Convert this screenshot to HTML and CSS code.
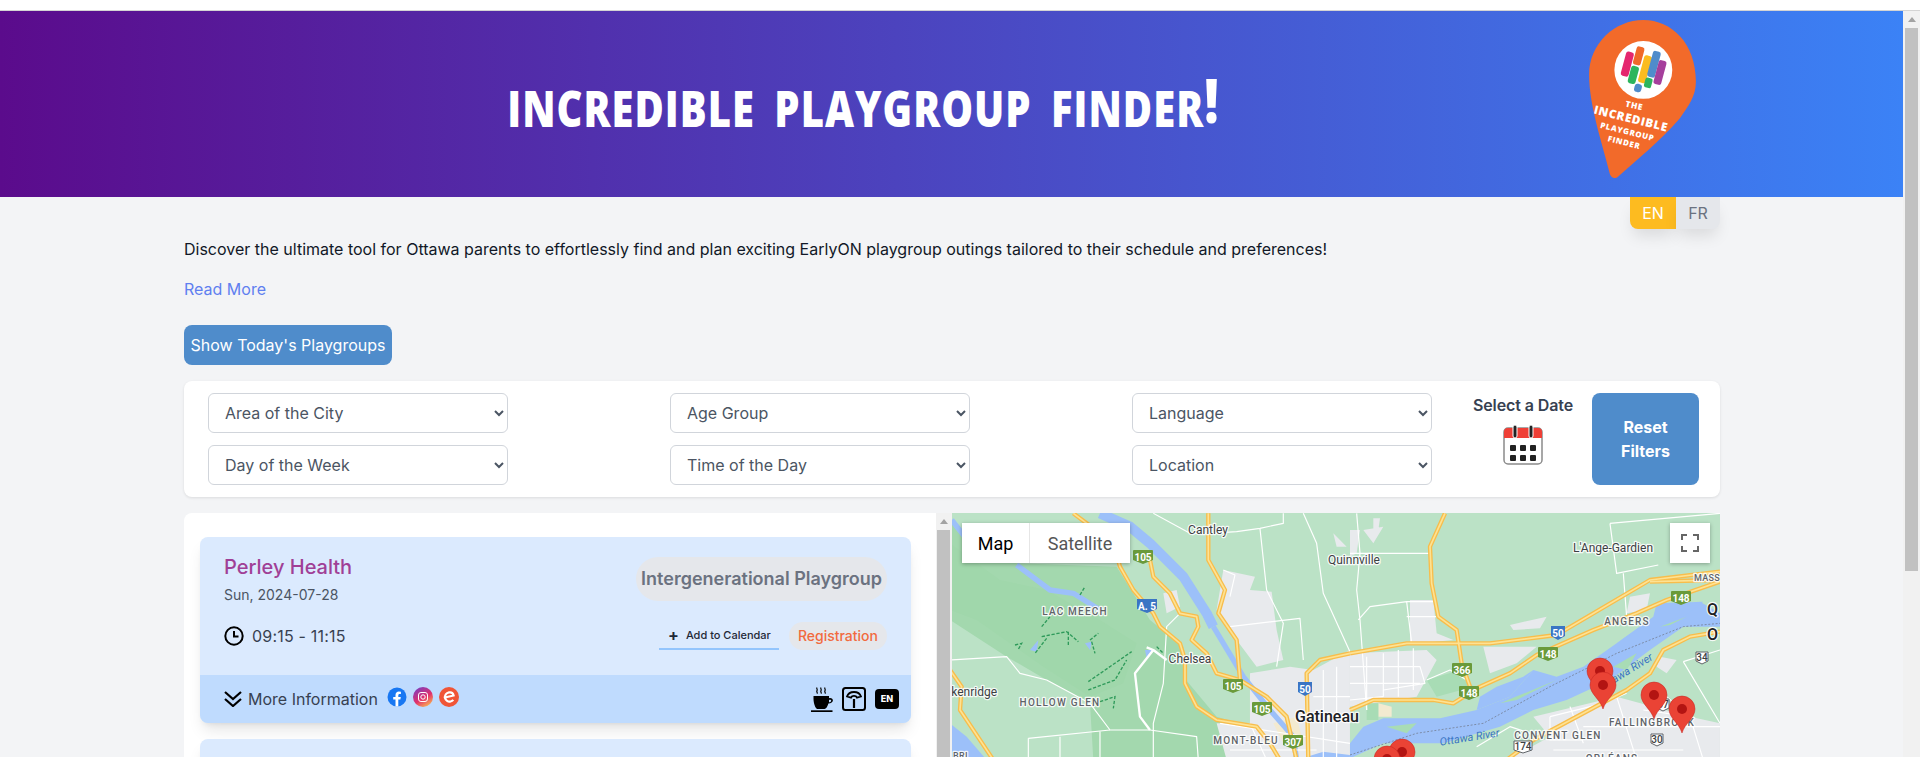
FILE: index.html
```html
<!DOCTYPE html>
<html lang="en">
<head>
  <meta charset="UTF-8" />
  <meta name="viewport" content="width=device-width, initial-scale=1.0"/>
  <title>Incredible Playgroup Finder</title>
  <link rel="stylesheet" href="styles.css">
</head>
<body>
  <div class="window">
    <div class="page">
      <header class="site-header">
        <h1 class="site-title">Incredible Playgroup Finder<span class="bang">!</span></h1>
        <svg class="logo" viewBox="87 30 321 475" aria-label="The Incredible Playgroup Finder">
          <path class="logo-pin" d="M150 495C130 410 87 290 87 195C87 100 165 30 250 30C335 30 408 100 408 215C408 260 385 290 360 325C300 395 230 450 172 503Q158 510 150 495Z"/>
          <circle cx="250" cy="180" r="87" fill="#fff"/>
          <rect x="190" y="125" width="24" height="75" rx="7" fill="#e5266f" transform="rotate(15 202 162)"/>
          <rect x="224" y="110" width="24" height="56" rx="7" fill="#f0692a" transform="rotate(15 236 138)"/>
          <rect x="208" y="168" width="24" height="54" rx="7" fill="#2db55d" transform="rotate(15 220 195)"/>
          <rect x="243" y="136" width="24" height="84" rx="7" fill="#fbbc20" transform="rotate(15 255 178)"/>
          <rect x="270" y="123" width="24" height="80" rx="7" fill="#4f8ccb" transform="rotate(15 282 163)"/>
          <rect x="288" y="151" width="24" height="74" rx="7" fill="#a53f9c" transform="rotate(15 300 188)"/>
          <rect x="254" y="204" width="22" height="30" rx="6" fill="#2db55d" transform="rotate(15 265 218)"/>
          <rect x="223" y="222" width="22" height="25" rx="9" fill="#4f8ccb" transform="rotate(15 234 234)"/>
          <g class="logo-text">
            <text x="221" y="296" font-size="25" transform="rotate(12 221 296)">THE</text>
            <text x="210" y="338" font-size="35" transform="rotate(14 210 338)">INCREDIBLE</text>
            <text x="200" y="374" font-size="24" transform="rotate(14 200 374)">PLAYGROUP</text>
            <text x="190" y="406" font-size="24" transform="rotate(14 190 406)">FINDER</text>
          </g>
        </svg>
      </header>

      <main class="container">
        <div class="lang-switch">
          <button class="lang lang-active">EN</button>
          <button class="lang">FR</button>
        </div>

        <p class="intro">Discover the ultimate tool for Ottawa parents to effortlessly find and plan exciting EarlyON playgroup outings tailored to their schedule and preferences!</p>
        <a class="read-more" href="#">Read More</a>

        <button class="today-btn">Show Today's Playgroups</button>

        <section class="filters">
          <div class="filter-grid">
            <select><option>Area of the City</option></select>
            <select><option>Age Group</option></select>
            <select><option>Language</option></select>
            <select><option>Day of the Week</option></select>
            <select><option>Time of the Day</option></select>
            <select><option>Location</option></select>
          </div>
          <div class="date-pick">
            <span class="date-label">Select a Date</span>
            <svg class="cal-icon" viewBox="0 0 40 40">
              <rect x="1" y="3" width="38" height="36" rx="4" fill="#fff" stroke="#8a8a8a" stroke-width="1.5"/>
              <path d="M1 13V7a4 4 0 0 1 4-4h30a4 4 0 0 1 4 4v6z" fill="#ef3f36"/>
              <rect x="10" y="0" width="4" height="13" rx="2" fill="#222" stroke="#fff"/>
              <rect x="26" y="0" width="4" height="13" rx="2" fill="#222" stroke="#fff"/>
              <g fill="#222">
                <rect x="7" y="20" width="6" height="6" rx="1"/>
                <rect x="17" y="20" width="6" height="6" rx="1"/>
                <rect x="27" y="20" width="6" height="6" rx="1"/>
                <rect x="7" y="30" width="6" height="6" rx="1"/>
                <rect x="17" y="30" width="6" height="6" rx="1"/>
                <rect x="27" y="30" width="6" height="6" rx="1"/>
              </g>
            </svg>
          </div>
          <button class="reset-btn">Reset Filters</button>
        </section>

        <section class="results">
          <div class="list-panel">
            <div class="list">
              <article class="card">
                <div class="card-body">
                  <div class="card-left">
                    <h2 class="venue">Perley Health</h2>
                    <div class="date">Sun, 2024-07-28</div>
                    <div class="time">
                      <svg class="clock" viewBox="0 0 20 20">
                        <circle cx="10" cy="10" r="8.700" fill="none" stroke="#000" stroke-width="2"/>
                        <path d="M10 5v5.500h4.500" fill="none" stroke="#000" stroke-width="2"/>
                      </svg>
                      09:15 - 11:15
                    </div>
                  </div>
                  <div class="card-right">
                    <span class="type-pill">Intergenerational Playgroup</span>
                    <div class="card-actions">
                      <a class="add-cal" href="#"><span class="plus">+</span>Add to Calendar</a>
                      <a class="reg-pill" href="#">Registration</a>
                    </div>
                  </div>
                </div>
                <div class="card-foot">
                  <div class="more">
                    <svg class="chevrons" viewBox="0 0 18 16">
                      <path d="M1 1l8 7 8-7M1 8l8 7 8-7" fill="none" stroke="#000" stroke-width="2.200"/>
                    </svg>
                    <span>More Information</span>
                    <div class="socials">
                      <svg class="social fb" viewBox="0 0 20 20">
                        <circle cx="10" cy="10" r="9.500" fill="#1877f2"/>
                        <path d="M8.500 19.500v-7H6.200V10h2.300V8c0-2.300 1.400-3.500 3.400-3.500l2 .2v2.200h-1.200c-1 0-1.400.6-1.400 1.300V10h2.500l-.4 2.500h-2.100v7z" fill="#fff"/>
                      </svg>
                      <svg class="social" viewBox="0 0 20 20">
                        <defs>
                          <linearGradient id="ig" x1="0.800" y1="1" x2="0.200" y2="0">
                            <stop offset="0" stop-color="#fdc04e"/>
                            <stop offset="0.450" stop-color="#e1306c"/>
                            <stop offset="1" stop-color="#7b3dc0"/>
                          </linearGradient>
                        </defs>
                        <circle cx="10" cy="10" r="10" fill="url(#ig)"/>
                        <rect x="5.500" y="5.500" width="9" height="9" rx="2.500" fill="none" stroke="#fff"/>
                        <circle cx="10" cy="10" r="2.200" fill="none" stroke="#fff"/>
                      </svg>
                      <svg class="social" viewBox="0 0 20 20">
                        <circle cx="10" cy="10" r="10" fill="#f05537"/>
                        <path d="M4.800 10.800l9.800-2.300C14 6 12 5 10 5.400 7.200 6 5.600 8.400 6.100 11c.5 2.500 3 4.100 5.500 3.500 1.100-.2 2-.8 2.700-1.600" fill="none" stroke="#fff" stroke-width="2.200"/>
                      </svg>
                    </div>
                  </div>
                  <div class="amenities">
                    <svg class="cup" viewBox="0 0 22 25">
                      <path d="M6 .5c-1 1.300 1 1.800 0 3.100s1 1.800 0 3.100M10 .5c-1 1.300 1 1.800 0 3.100s1 1.800 0 3.100M14 .5c-1 1.300 1 1.800 0 3.100s1 1.800 0 3.100" fill="none" stroke="#000" stroke-width="1.200"/>
                      <path d="M2.500 9H18v2.200c2.500-.5 3.900.7 3.900 2.200s-1.800 3-4.500 3.200c-.7 2-1.800 5.400-3.900 5.400h-7C4.500 22 2.500 16 2.500 12zM18 13v2.300c1.500-.2 2.200-.8 2.200-1.600s-1-1-2.200-.7z" fill="#000"/>
                      <rect x="0" y="23.300" width="21.500" height="1.700" fill="#000"/>
                    </svg>
                    <svg class="scale" viewBox="0 0 24 24">
                      <rect x="1" y="1" width="22" height="22" rx="2.500" fill="none" stroke="#000" stroke-width="2"/>
                      <path d="M5 9.500C6 6.500 9 5 12 5s6 1.500 7 4.500l-4 1.200c-.5-1.200-1.700-1.900-3-1.900s-2.500.7-3 1.900z" fill="none" stroke="#000" stroke-width="1.800"/>
                      <path d="M12 12v9" stroke="#000" stroke-width="2.200"/>
                    </svg>
                    <span class="lang-badge">EN</span>
                  </div>
                </div>
              </article>
              <article class="card card-next"></article>
            </div>
            <div class="list-scroll">
              <span class="arrow-up"></span>
              <span class="list-thumb"></span>
            </div>
          </div>

          <div class="map">
            <svg class="map-art" viewBox="0 0 768 244">
              <defs>
                <g id="roads-west">
                  <path d="M370 10L410 40L490 100L510 170L550 240L610 310L630 350L690 400L705 450L705 520L740 590L800 630L920 650L960 700L990 750"/>
                  <path d="M600 150L610 200L660 250L690 310L740 320L745 350L725 390L770 430L800 490L870 510L950 560L1010 620L1040 750"/>
                  <path d="M775 10L775 150L825 240L805 310L860 390L870 510"/>
                  <path d="M1200 430L1110 450L1070 490L1075 750"/>
                  <path d="M0 480L35 530L30 600L130 750"/>
                </g>
                <g id="roads-east">
                  <path d="M285 10L240 110L245 220L265 320L320 360L335 460L360 530"/>
                  <path d="M0 430L170 400L420 400L620 375L900 210L1110 185"/>
                  <path d="M900 215L1110 210"/>
                  <path d="M0 600L70 570L250 570L310 580L390 530L480 490L560 435L640 400L730 360L860 310L950 270L1110 215"/>
                  <path d="M470 750L550 690L830 540L900 490L940 420L1020 380L1110 365"/>
                </g>
                <g id="pin">
                  <path class="pin-body" d="M0 0C-3-10-13-15-13-24a13 13 0 1 1 26 0C13-15 3-10 0 0z"/>
                  <circle class="pin-dot" cx="0" cy="-24" r="5"/>
                </g>
              </defs>

              <rect class="land" width="768" height="244"/>

              <!-- west half, drawn in zoomed coordinates -->
              <g transform="translate(-2 -3) scale(.3333)">
                <path class="park" d="M0 40L200 160L500 170L600 330L700 410L700 500L800 620L900 650L950 750L430 750L420 580L290 510L170 440L0 330Z"/>
                <path class="park-deep" d="M0 100L150 210L290 240L450 330L560 400L520 520L420 560L280 470L80 330L0 300Z"/>
                <path class="city" d="M820 180L915 200L900 240L965 245L980 360L1000 450L920 470L860 390L800 300ZM900 490L1020 470L1090 480L1200 420V750H830L800 640L900 640Z"/>
                <path class="city" d="M640 250L680 240L690 290L650 310ZM1150 70L1190 110L1160 110Z"/>
                <path class="sand" d="M970 640L1040 620L1060 700L1000 700Z"/>
                <path class="water-line wide" d="M450 10L540 50L600 100L700 200L770 310L790 350"/>
                <path class="water-line" d="M790 350L850 450L880 500L960 600L1030 680L1040 750"/>
                <path class="water-line" d="M200 165L300 240L370 250L450 300"/>
                <path class="water-line" d="M5 30L60 100"/>
                <path class="water" d="M0 640L50 680L110 750H0ZM240 420L265 390L260 425ZM405 400L425 395L420 420ZM585 420L610 420L590 445Z"/>
                <path class="water" d="M1040 750L1120 725L1200 735V750Z"/>
                <path class="trail" d="M390 255L405 230M275 350L300 320M275 380L350 365L385 395M355 365L355 405M290 385L255 430M420 390L445 370M425 395L435 430M415 515L545 425M415 540L495 510L530 450M450 575L495 560L490 595M195 405L215 400L205 418M620 410L640 430"/>
                <path class="street" d="M0 450L170 440L210 490L290 510L420 580L480 660L600 660L740 680L745 750"/>
                <path class="street" d="M235 685L480 660M235 685V750M330 680V750M450 665V750"/>
                <path class="street" d="M690 310L650 350L640 520L610 640L610 750"/>
                <path class="street thick" d="M590 412L610 420L650 450M610 420L555 490L570 620L600 660"/>
                <path class="street" d="M610 10L720 70L780 70L860 65L930 55L1000 40L1000 10M930 55L950 240L1000 340L980 470M840 260L855 195L820 180M840 350L1050 325L1060 450M1060 10L1100 100L1120 250L1200 425"/>
                <path class="street" d="M810 640L1200 700M900 640L950 750M1120 480V750M1160 470V750M1090 560H1200M1070 620H1200M840 720H1100"/>
                <use href="#roads-west" class="road-o"/>
                <use href="#roads-west" class="road-i"/>
              </g>

              <!-- east half -->
              <g transform="translate(398 -3) scale(.3333)">
                <path class="city" d="M40 60L100 50L70 100ZM70 25L90 25L85 60L70 60ZM0 60L30 60L20 130L0 140ZM180 270L250 270L260 370L310 390L210 400L180 400ZM0 430L230 420L260 450L200 560L0 590Z"/>
                <path class="city" d="M480 345L590 320L570 355L490 360ZM400 410L560 410L500 460L420 490ZM840 260L900 250L890 300L830 310ZM550 620L800 560L1020 620L1110 640V750H470L600 680ZM930 440L980 450L950 490L920 470Z"/>
                <path class="sand" d="M85 580L125 590L125 620L85 620Z"/>
                <path class="lawn" d="M50 580L85 580L85 630L50 630ZM230 510L330 480L370 530L260 560Z"/>
                <path class="water" d="M0 700L40 650L100 625L270 625L380 600L480 560L550 480L620 500L700 470L800 400L900 330L1050 275L1110 310V350H1000L900 420L780 510L650 570L550 600L450 650L280 700L100 700L0 745Z"/>
                <path class="water" d="M380 600L390 560L440 530L520 500L550 480L480 560ZM800 400L910 320L920 280L1060 275L1000 320L900 340Z"/>
                <path class="islet" d="M110 650L200 640L170 670ZM450 580L620 510L500 570ZM930 350L1010 320L960 345ZM790 470L860 430L830 480Z"/>
                <path class="border-dash" d="M0 735L200 670L400 640L600 530L800 430L1000 350L1110 340"/>
                <path class="street" d="M25 330L60 290L170 275L250 275M170 275L185 400M170 320H260M20 10L30 130L20 240L30 330L50 600M0 130L240 130M100 560L0 570"/>
                <path class="street" d="M780 40L1110 10M780 40L800 190L925 165M820 190L830 320M0 470H210L225 520L100 540M50 440V600M100 430V560M145 420V560M190 415V540M0 520H210"/>
                <path class="street" d="M230 510L300 480L350 510M600 620L760 580L830 550M600 620V690L700 690M800 560L860 750M660 590L700 700M880 600L1020 620L1060 750M1000 455L1110 420M1000 455L1110 640M950 560L1020 620M700 650H1110M610 720H1000M380 710L480 650L540 670"/>
                <use href="#roads-east" class="road-o"/>
                <use href="#roads-east" class="road-i"/>
              </g>

              <g class="labels">
                <text class="place" x="256" y="21">Cantley</text>
                <text class="place" x="238" y="150">Chelsea</text>
                <text class="place end" x="45" y="183">kenridge</text>
                <text class="place" x="402" y="51">Quinnville</text>
                <text class="place" x="661" y="39">L'Ange-Gardien</text>
                <text class="area" x="123" y="102">LAC MEECH</text>
                <text class="area" x="108" y="193">HOLLOW GLEN</text>
                <text class="area" x="294" y="231">MONT-BLEU</text>
                <text class="area" x="675" y="112">ANGERS</text>
                <text class="area" x="606" y="226">CONVENT GLEN</text>
                <text class="area" x="700" y="213">FALLINGBROOK</text>
                <text class="area" x="660" y="249">ORLÉANS</text>
                <text class="area tight start" x="742" y="68">MASS</text>
                <text class="area tight start" x="1" y="246">BRI</text>
                <text class="city-name start" x="343" y="209">Gatineau</text>
                <text class="city-name start" x="755" y="102">Q</text>
                <text class="city-name start" x="755" y="127">O</text>
                <text class="river" x="518" y="228" transform="rotate(-9 518 228)">Ottawa River</text>
                <text class="river" x="676" y="162" transform="rotate(-32 676 162)">Ottawa River</text>
              </g>

              <g class="shield green" transform="translate(191 44)"><path d="M-9-7h18a1 1 0 0 1 1 1v9l-10 4-10-4v-9a1 1 0 0 1 1-1z"/><text y="3.500">105</text></g>
              <g class="shield green" transform="translate(281 173)"><path d="M-9-7h18a1 1 0 0 1 1 1v9l-10 4-10-4v-9a1 1 0 0 1 1-1z"/><text y="3.500">105</text></g>
              <g class="shield green" transform="translate(310 196)"><path d="M-9-7h18a1 1 0 0 1 1 1v9l-10 4-10-4v-9a1 1 0 0 1 1-1z"/><text y="3.500">105</text></g>
              <g class="shield green" transform="translate(341 229)"><path d="M-9-7h18a1 1 0 0 1 1 1v9l-10 4-10-4v-9a1 1 0 0 1 1-1z"/><text y="3.500">307</text></g>
              <g class="shield green" transform="translate(510 157)"><path d="M-9-7h18a1 1 0 0 1 1 1v9l-10 4-10-4v-9a1 1 0 0 1 1-1z"/><text y="3.500">366</text></g>
              <g class="shield green" transform="translate(517 180)"><path d="M-9-7h18a1 1 0 0 1 1 1v9l-10 4-10-4v-9a1 1 0 0 1 1-1z"/><text y="3.500">148</text></g>
              <g class="shield green" transform="translate(596 141)"><path d="M-9-7h18a1 1 0 0 1 1 1v9l-10 4-10-4v-9a1 1 0 0 1 1-1z"/><text y="3.500">148</text></g>
              <g class="shield green" transform="translate(729 85)"><path d="M-9-7h18a1 1 0 0 1 1 1v9l-10 4-10-4v-9a1 1 0 0 1 1-1z"/><text y="3.500">148</text></g>
              <g class="shield blue" transform="translate(195 93)"><path d="M-10-7h20v10l-10 4-10-4z"/><text y="3.500">A. 5</text></g>
              <g class="shield blue" transform="translate(353 176)"><path d="M-7-7h14v10l-7 4-7-4z"/><text y="3.500">50</text></g>
              <g class="shield blue" transform="translate(606 120)"><path d="M-7-7h14v10l-7 4-7-4z"/><text y="3.500">50</text></g>
              <g class="shield white" transform="translate(750 145)"><path d="M-6-6h12v9l-6 3-6-3z"/><text y="3">34</text></g>
              <g class="shield white" transform="translate(571 234)"><path d="M-9-6h18v9l-9 3-9-3z"/><text y="3">174</text></g>
              <g class="shield white" transform="translate(705 227)"><path d="M-6-6h12v9l-6 3-6-3z"/><text y="3">30</text></g>
              <g class="shield white" transform="translate(711 192)"><path d="M-6-6h12v9l-6 3-6-3z"/><text y="3">37</text></g>

              <use href="#pin" x="648" y="182"/>
              <use href="#pin" x="651" y="196"/>
              <use href="#pin" x="702" y="206"/>
              <use href="#pin" x="730" y="220"/>
              <use href="#pin" x="450" y="263"/>
              <use href="#pin" x="435" y="270"/>
            </svg>

            <div class="map-type">
              <button class="map-type-btn map-type-on">Map</button>
              <button class="map-type-btn">Satellite</button>
            </div>
            <button class="fullscreen" aria-label="Toggle fullscreen view">
              <svg viewBox="0 0 18 18" width="18" height="18">
                <path d="M0 6V0h6v2H2v4zM12 0h6v6h-2V2h-4zM0 12h2v4h4v2H0zM16 12h2v6h-6v-2h4z" fill="#666"/>
              </svg>
            </button>
          </div>
        </section>
      </main>
    </div>

    <div class="page-scroll">
      <span class="arrow-up"></span>
      <span class="page-thumb"></span>
    </div>
  </div>
</body>
</html>
```

FILE: styles.css
```css
* {
  box-sizing: border-box;
}

html, body {
  height: 757px;
  overflow: hidden;
}

body {
  margin: 0;
  padding-top: 10px;
  background: #fff;
  font-family: Inter, "Liberation Sans", sans-serif;
  color: #111827;
}

button {
  font-family: inherit;
  border: none;
  cursor: pointer;
}

a {
  text-decoration: none;
}

.window {
  display: flex;
  height: 747px;
  border-top: 1px solid #d4d4d4;
}

.page {
  flex: 1;
  min-width: 0;
  background: #f3f4f6;
}

/* header */
.site-header {
  display: flex;
  align-items: flex-start;
  height: 186px;
  background: linear-gradient(to right, #5b0b8c, #3b82f6);
}

.site-title {
  flex: 1;
  margin: 59px 0 0;
  padding-left: 137px;
  text-align: center;
  font-family: "Open Sans", sans-serif;
  font-size: 40px;
  font-weight: 800;
  line-height: 60px;
  letter-spacing: 1px;
  word-spacing: 8px;
  text-transform: uppercase;
  color: #fff;
  transform: scaleY(1.25);
}

.bang {
  font-size: 50px;
  line-height: 60px;
  letter-spacing: 0;
  vertical-align: 3px;
}

.logo {
  flex: none;
  width: 107px;
  height: 158px;
  margin: 9px 207px 0 0;
}

.logo-pin {
  fill: #f26a2a;
}

.logo-text {
  fill: #fff;
  font-family: "Open Sans", sans-serif;
  font-weight: 800;
  text-anchor: middle;
  letter-spacing: 2px;
}

/* main column */
.container {
  width: 1536px;
  margin-left: 184px;
}

.lang-switch {
  display: flex;
  justify-content: flex-end;
  height: 32px;
}

.lang {
  width: 44px;
  height: 32px;
  padding: 0;
  font-size: 16px;
  background: #e5e7eb;
  color: #6b7280;
  border-radius: 0 0 8px 0;
  box-shadow: 0 10px 15px -3px rgba(0, 0, 0, 0.1);
}

.lang-active {
  width: 46px;
  background: #fdbb20;
  color: #fff;
  border-radius: 0 0 0 8px;
}

.intro {
  margin: 8px 0 0;
  font-size: 16px;
  line-height: 24px;
}

.read-more {
  display: block;
  margin-top: 16px;
  font-size: 16px;
  line-height: 24px;
  color: #5f7ff0;
}

.today-btn {
  display: block;
  width: 208px;
  height: 40px;
  margin-top: 24px;
  padding: 0;
  font-size: 16px;
  background: #4f8ccb;
  color: #fff;
  border-radius: 8px;
}

/* filters */
.filters {
  display: flex;
  height: 116px;
  margin-top: 16px;
  padding: 12px 21px 12px 24px;
  background: #fff;
  border-radius: 8px;
  box-shadow: 0 1px 3px rgba(0, 0, 0, 0.1);
}

.filter-grid {
  display: grid;
  grid-template-columns: repeat(3, 300px);
  grid-template-rows: 40px 40px;
  column-gap: 162px;
  row-gap: 12px;
}

.filter-grid select {
  width: 100%;
  height: 40px;
  padding: 0 8px 0 12px;
  font-family: inherit;
  font-size: 16px;
  color: #4b5563;
  background: #fff;
  border: 1px solid #d1d5db;
  border-radius: 6px;
}

.date-pick {
  display: flex;
  flex-direction: column;
  align-items: center;
  width: 160px;
  padding-left: 22px;
}

.date-label {
  font-size: 16px;
  font-weight: 600;
  line-height: 24px;
  letter-spacing: -0.100px;
  color: #374151;
}

.cal-icon {
  width: 40px;
  height: 40px;
  margin-top: 8px;
}

.reset-btn {
  width: 107px;
  height: 92px;
  padding: 0 16px;
  font-size: 16px;
  font-weight: 700;
  line-height: 24px;
  background: #4f8ccb;
  color: #fff;
  border-radius: 8px;
}

/* results */
.results {
  display: grid;
  grid-template-columns: 768px 768px;
  height: 244px;
  margin-top: 16px;
}

.list-panel {
  display: flex;
  background: #fff;
  border-radius: 8px 0 0 0;
  overflow: hidden;
}

.list {
  flex: 1;
  padding: 24px 25px 0 16px;
}

.list-scroll {
  flex: none;
  position: relative;
  width: 16px;
  background: #f1f1f1;
}

.card {
  border-radius: 8px;
  background: #dbeafe;
  box-shadow: 0 10px 15px -3px rgba(0, 0, 0, 0.1), 0 4px 6px -4px rgba(0, 0, 0, 0.1);
  overflow: hidden;
}

.card-next {
  height: 60px;
  margin-top: 16px;
}

.card-body {
  display: flex;
  justify-content: space-between;
  height: 138px;
  padding: 16px 24px 0;
}

.venue {
  margin: 0;
  font-size: 20px;
  font-weight: 500;
  line-height: 28px;
  color: #a03f96;
}

.date {
  margin-top: 4px;
  font-size: 14px;
  line-height: 20px;
  color: #4b5563;
}

.time {
  display: flex;
  align-items: center;
  gap: 8px;
  margin-top: 19px;
  font-size: 16px;
  line-height: 24px;
  letter-spacing: 0.200px;
  color: #374151;
}

.clock {
  width: 20px;
  height: 20px;
}

.card-right {
  display: flex;
  flex-direction: column;
  align-items: flex-end;
  padding-top: 4px;
}

.type-pill {
  padding: 8px 5px;
  font-size: 18px;
  font-weight: 600;
  line-height: 28px;
  color: #6b7280;
  background: #e5e7eb;
  border-radius: 22px;
}

.card-actions {
  display: flex;
  align-items: flex-end;
  gap: 10px;
  margin-top: 21px;
}

.add-cal {
  display: flex;
  align-items: center;
  width: 120px;
  height: 28px;
  padding-left: 9px;
  font-size: 11px;
  font-weight: 500;
  color: #1f2937;
  border-bottom: 2px solid #93c5fd;
}

.plus {
  width: 18px;
  font-size: 16px;
  font-weight: 700;
  line-height: 16px;
}

.reg-pill {
  height: 28px;
  padding: 0 9px;
  font-size: 14px;
  font-weight: 500;
  line-height: 28px;
  color: #f26a3e;
  background: #e5e7eb;
  border-radius: 14px;
}

.card-foot {
  display: flex;
  justify-content: space-between;
  align-items: center;
  height: 48px;
  padding: 0 12px 0 24px;
  background: #bfdbfe;
}

.more {
  display: flex;
  align-items: center;
  gap: 6px;
  font-size: 16px;
  color: #374151;
}

.chevrons {
  width: 18px;
  height: 16px;
}

.socials {
  display: flex;
  align-items: center;
  gap: 6px;
  margin: -4px 0 0 3px;
}

.social {
  width: 20px;
  height: 20px;
}

.amenities {
  display: flex;
  align-items: center;
  gap: 9px;
}

.cup {
  width: 22px;
  height: 25px;
}

.scale {
  width: 24px;
  height: 24px;
}

.lang-badge {
  width: 24px;
  height: 20px;
  font-size: 9px;
  font-weight: 800;
  line-height: 20px;
  text-align: center;
  color: #fff;
  background: #000;
  border-radius: 4px;
}

/* map */
.map {
  position: relative;
  overflow: hidden;
}

.map-art {
  display: block;
  width: 768px;
  height: 244px;
}

.land { fill: #bbe2c6; }
.park { fill: #a3d8ae; }
.park-deep { fill: #a0d7ab; }
.city { fill: #e8eaed; }
.sand { fill: #f3ead0; }
.lawn { fill: #a8dcb5; }
.water { fill: #9cc0f9; }
.islet { fill: #a8dcb5; }

.water-line {
  fill: none;
  stroke: #9cc0f9;
  stroke-width: 16;
  stroke-linejoin: round;
}

.water-line.wide {
  stroke-width: 30;
}

.trail {
  fill: none;
  stroke: #2e9a5a;
  stroke-width: 4;
  stroke-dasharray: 10 5;
}

.street {
  fill: none;
  stroke: #fff;
  stroke-width: 3.500;
  stroke-linejoin: round;
}

.street.thick {
  stroke-width: 7;
}

.border-dash {
  fill: none;
  stroke: #7b8ca8;
  stroke-width: 3;
  stroke-dasharray: 6 5;
}

.road-o,
.road-i {
  fill: none;
  stroke-linejoin: round;
}

.road-o {
  stroke: #f8bd4b;
  stroke-width: 13;
}

.road-i {
  stroke: #fde293;
  stroke-width: 5;
}

.labels text {
  font-family: Roboto, sans-serif;
  text-anchor: middle;
  paint-order: stroke;
  stroke: rgba(255, 255, 255, 0.85);
  stroke-width: 2.500px;
  stroke-linejoin: round;
}

.labels text.end { text-anchor: end; }
.labels text.start { text-anchor: start; }

.place {
  font-size: 12px;
  fill: #3c4043;
}

.area {
  font-size: 10px;
  font-weight: 500;
  letter-spacing: 1.200px;
  fill: #5f6368;
}

.area.tight {
  font-size: 9px;
  letter-spacing: 0.300px;
}

.city-name {
  font-size: 16px;
  font-weight: 500;
  fill: #202124;
}

.labels .river {
  font-size: 11px;
  font-style: italic;
  fill: #3a75c4;
  stroke: none;
}

.shield text {
  font-family: Roboto, sans-serif;
  font-size: 10px;
  font-weight: 700;
  text-anchor: middle;
  fill: #fff;
}

.shield.green path { fill: #6a9a3a; }
.shield.blue path { fill: #3a75c4; }

.shield.white path {
  fill: #fff;
  stroke: #5f6368;
}

.shield.white text {
  fill: #3c4043;
  font-weight: 500;
}

.pin-body {
  fill: #ea4335;
  stroke: #c5221f;
  stroke-width: 0.500;
}

.pin-dot {
  fill: #b31412;
}

.map-type {
  position: absolute;
  top: 10px;
  left: 10px;
  display: flex;
  box-shadow: 0 1px 4px rgba(0, 0, 0, 0.3);
}

.map-type-btn {
  width: 100px;
  height: 40px;
  padding: 0;
  font-family: Roboto, sans-serif;
  font-size: 18px;
  color: #565656;
  background: #fff;
}

.map-type-on {
  width: 68px;
  color: #000;
  border-right: 1px solid #e6e6e6;
}

.fullscreen {
  position: absolute;
  top: 10px;
  right: 10px;
  display: flex;
  justify-content: center;
  align-items: center;
  width: 40px;
  height: 40px;
  padding: 0;
  background: #fff;
  box-shadow: 0 1px 4px rgba(0, 0, 0, 0.3);
}

/* scrollbars */
.page-scroll {
  flex: none;
  position: relative;
  width: 17px;
  background: #f1f1f1;
}

.arrow-up {
  position: absolute;
  top: 6px;
  left: 50%;
  margin-left: -4px;
  border: 4px solid transparent;
  border-top: 0;
  border-bottom: 5px solid #a3a3a3;
}

.page-thumb {
  position: absolute;
  top: 17px;
  left: 2px;
  width: 13px;
  height: 543px;
  background: #c1c1c1;
}

.list-thumb {
  position: absolute;
  top: 17px;
  bottom: 0;
  left: 1px;
  width: 13px;
  background: #c1c1c1;
}
```
